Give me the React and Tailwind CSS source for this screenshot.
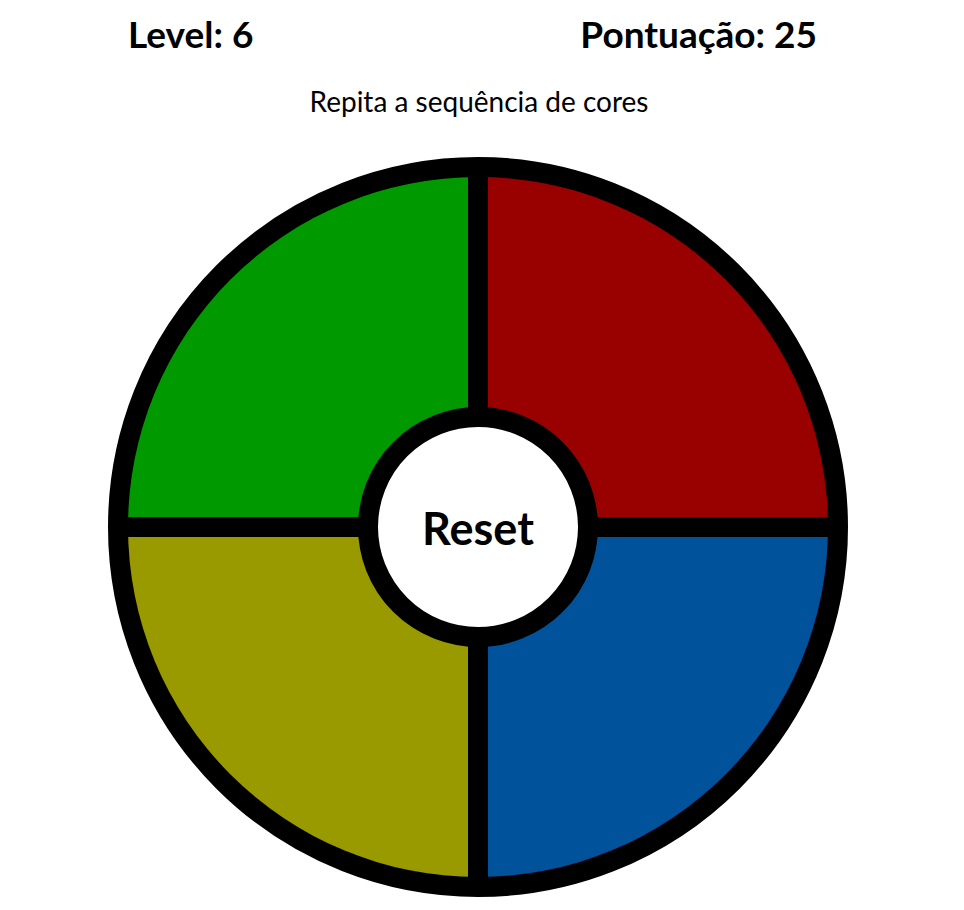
export default function App() {
  return (
    <div className="min-h-screen bg-white text-black font-['Lato',_'Open_Sans',_sans-serif]">
      {/* placar */}
      <div className="flex justify-between pt-[12px] pl-[128px] pr-[147px]">
        <h1 className="text-[37px] font-bold leading-[1.2]">Level: 6</h1>
        <h1 className="text-[37px] font-bold leading-[1.2]">Pontuação: 25</h1>
      </div>

      <p className="mt-[29px] pr-[6px] text-center text-[28px] leading-[1.2]">
        Repita a sequência de cores
      </p>

      {/* tabuleiro */}
      <div className="mt-[38px] flex justify-center pr-[8px]">
        <div className="relative h-[740px] w-[740px] overflow-hidden rounded-full border-[20px] border-black bg-black">
          <div className="grid h-full w-full grid-cols-2 grid-rows-2 gap-[20px]">
            <button className="bg-[#009900]" aria-label="verde" />
            <button className="bg-[#990000]" aria-label="vermelho" />
            <button className="bg-[#999900]" aria-label="amarelo" />
            <button className="bg-[#00529b]" aria-label="azul" />
          </div>
          <button className="absolute left-1/2 top-1/2 flex h-[240px] w-[240px] -translate-x-1/2 -translate-y-1/2 items-center justify-center rounded-full border-[20px] border-black bg-white pt-[3px] text-[45px] font-bold leading-[1.2]">
            Reset
          </button>
        </div>
      </div>
    </div>
  );
}
